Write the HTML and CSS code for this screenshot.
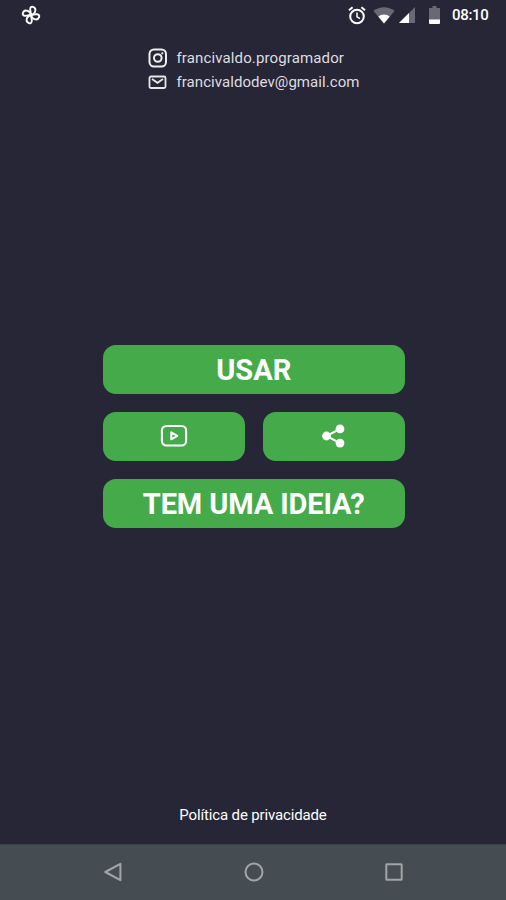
FILE: index.html
```html
<!DOCTYPE html>
<html lang="pt-BR">
<head>
<meta charset="utf-8">
<title>francivaldo.programador</title>
<link rel="stylesheet" href="styles.css">
</head>
<body>
<div class="screen">
  <div class="status">
    <svg class="pinwheel" width="20" height="20" viewBox="0 0 20 20" fill="none" stroke="#fff" stroke-width="1.900" stroke-linejoin="round">
      <g transform="rotate(6 10 10)">
        <path id="blade" d="M10 10L8.600 4.500C8.300 2.300 9.700 1.300 11.200 1.700C13.400 2.300 14.200 4.200 13.700 6.300C13.200 8.300 11.700 9.500 10 10Z"/>
        <use href="#blade" transform="rotate(90 10 10)"/>
        <use href="#blade" transform="rotate(180 10 10)"/>
        <use href="#blade" transform="rotate(270 10 10)"/>
      </g>
    </svg>
    <div class="indicators">
      <svg class="alarm" width="18" height="19" viewBox="0 0 18 19" fill="none" stroke="#fff">
        <circle cx="9" cy="10.500" r="6.800" stroke-width="2"/>
        <path d="M1 4.300L4.600 1.300M17 4.300L13.400 1.300" stroke-width="2"/>
        <path d="M9 6.500V10.800L12 12.700" stroke-width="1.500"/>
      </svg>
      <svg class="wifi" width="22" height="17" viewBox="0 0 22 17">
        <path d="M0.500 4C6.500-1 15.500-1 21.500 4L11 16.500Z" fill="#6a6875"/>
        <path d="M5.300 9.500C8.500 6.800 13.500 6.800 16.700 9.500L11 16.500Z" fill="#fff"/>
      </svg>
      <svg class="signal" width="16" height="16" viewBox="0 0 16 16">
        <path d="M0 16L16 0V16Z" fill="#6a6875"/>
        <path d="M0 16L10 6V16Z" fill="#fff"/>
      </svg>
      <svg class="battery" width="11" height="18" viewBox="0 0 11 18">
        <path d="M3.500 0H7.500V2H11V14H0V2H3.500Z" fill="#6a6875"/>
        <path d="M0 13.500H11V17a1 1 0 0 1-1 1H1a1 1 0 0 1-1-1Z" fill="#fff"/>
      </svg>
      <span class="clock">08:10</span>
    </div>
  </div>
  <header class="contacts">
    <div class="contact">
      <svg width="20" height="20" viewBox="0 0 20 20" fill="none" stroke="#eee" stroke-width="2">
        <rect x="1.500" y="1.500" width="16.500" height="17" rx="4.500"/>
        <circle cx="9.800" cy="10" r="3.800"/>
        <circle cx="14.300" cy="5.300" r="1.100" fill="#eee" stroke="none"/>
      </svg>
      <span class="handle">francivaldo.programador</span>
    </div>
    <div class="contact">
      <svg width="20" height="20" viewBox="0 0 20 20" fill="none" stroke="#e6e6e8" stroke-width="1.800">
        <rect x="1.500" y="4.500" width="16" height="11.500" rx="1.500"/>
        <path d="M4 7L9.500 10.800L15 7"/>
      </svg>
      <span class="email">francivaldodev@gmail.com</span>
    </div>
  </header>
  <main class="actions">
    <button class="btn use">USAR</button>
    <button class="btn" aria-label="Vídeo">
      <svg width="28" height="24" viewBox="0 0 28 24" fill="none" stroke="#fff">
        <rect x="1.900" y="2" width="24.200" height="19.500" rx="4.500" stroke-width="2.100"/>
        <path d="M11.300 8.300L17.300 11.800L11.300 15.300Z" stroke-width="2" stroke-linejoin="round"/>
      </svg>
    </button>
    <button class="btn" aria-label="Compartilhar">
      <svg width="24" height="24" viewBox="0 0 24 24" fill="#fff">
        <path d="M18 4.900L4.500 12L18 19.100" fill="none" stroke="#fff" stroke-width="2"/>
        <circle cx="18" cy="4.900" r="4.400"/>
        <circle cx="4.500" cy="12" r="4.400"/>
        <circle cx="18" cy="19.100" r="4.400"/>
      </svg>
    </button>
    <button class="btn idea">TEM UMA IDEIA?</button>
  </main>
  <footer class="policy"><span>Política de privacidade</span></footer>
  <nav class="navbar">
    <svg width="20" height="20" viewBox="0 0 20 20"><path d="M17.400 1.800V18.200L2.300 10Z"/></svg>
    <svg width="20" height="20" viewBox="0 0 20 20"><circle cx="10" cy="10" r="8.500"/></svg>
    <svg width="20" height="20" viewBox="0 0 20 20"><rect x="2.300" y="2.300" width="15.400" height="15.400" rx="0.500"/></svg>
  </nav>
</div>
</body>
</html>
```

FILE: styles.css
```css
* { box-sizing: border-box; }
body { margin: 0; background: #272636; font-family: Roboto, sans-serif; color: #fff; }
svg { display: block; flex: none; overflow: visible; }
.screen { height: 900px; display: flex; flex-direction: column; }
.status { height: 30px; padding: 0 18px 0 21px; display: flex; justify-content: space-between; align-items: center; }
.indicators { display: flex; align-items: center; }
.wifi { margin-left: 7px; }
.signal { margin-left: 4px; }
.battery { margin-left: 14px; }
.clock { width: 36px; margin-left: 12px; font-size: 15px; font-weight: 500; letter-spacing: -0.300px; line-height: 18px; white-space: nowrap; }
.contacts { padding: 16px 0 0 148px; }
.contact { height: 24px; display: flex; align-items: center; gap: 8.500px; font-size: 15px; color: #dddde1; }
.handle { letter-spacing: 0.130px; }
.email { letter-spacing: 0.060px; }
.actions { margin: 251px 101px 0 102.500px; display: grid; grid-template-columns: 1fr 1fr; gap: 18.500px; grid-auto-rows: 48.500px; }
.btn { display: flex; align-items: center; justify-content: center; border: 0; border-radius: 13px; padding: 0; background: #45ab4a; color: #fff; font: 700 29px/48px Roboto, sans-serif; white-space: nowrap; }
.use, .idea { grid-column: 1 / -1; padding-top: 2px; }
.idea { letter-spacing: -0.120px; }
.policy { margin-top: auto; height: 39px; text-align: center; font-size: 15px; letter-spacing: -0.150px; line-height: 20px; }
.navbar { height: 56px; padding: 0 102px 2px 103px; display: flex; align-items: center; justify-content: space-between; background: #464d52; border-top: 1px solid #3d4249; }
.navbar svg { fill: none; stroke: #a0a5a7; stroke-width: 2; stroke-linejoin: round; }
```
